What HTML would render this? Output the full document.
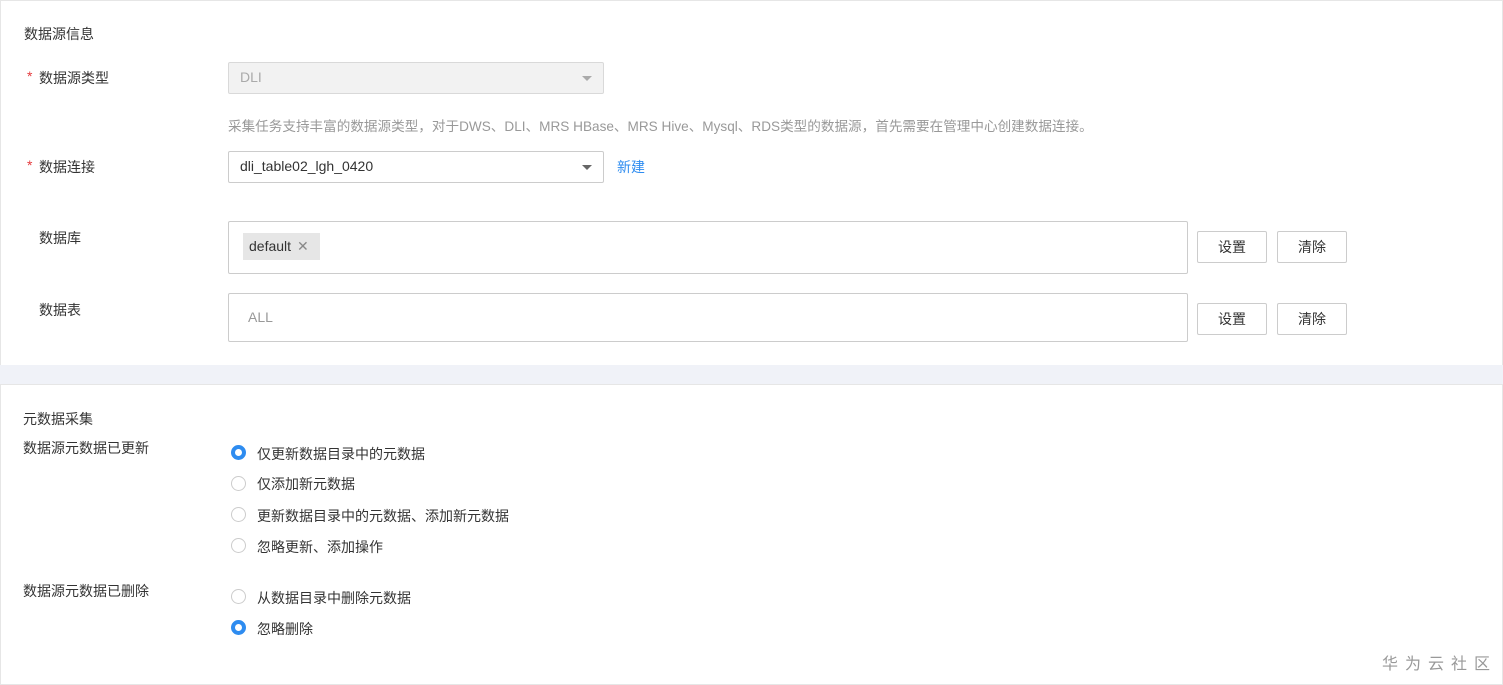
<!DOCTYPE html>
<html><head><meta charset="utf-8"><style>
*{margin:0;padding:0;box-sizing:border-box}
body{width:1503px;height:685px;background:#fff;font-family:"Liberation Sans","Noto Sans CJK SC",sans-serif;font-size:14px;color:#333;position:relative;overflow:hidden}
.a{position:absolute;white-space:nowrap}
.panel{position:absolute;left:0;width:1503px;border:1px solid #e6e6e6;background:#fff}
.req{color:#e4393c;position:absolute;left:-12px;top:0}
.box{position:absolute;border:1px solid #ccc;background:#fff;border-radius:2px}
.arrow{position:absolute;right:11px;top:13px;width:0;height:0;border-left:5px solid transparent;border-right:5px solid transparent;border-top:5px solid #666}
.btn{position:absolute;width:70px;height:32px;border:1px solid #ccc;border-radius:2px;text-align:center;line-height:30px;background:#fff;color:#333}
.r{position:absolute;left:231px;width:15px;height:15px;border-radius:50%;border:1px solid #ccc;background:#fff}
.r.on{border:4.5px solid #2e8cf0}
.rl{position:absolute;left:257px}
</style></head><body>
<div class="panel" style="top:0;height:366px"></div>
<div class="a" style="left:0;top:365px;width:1503px;height:19px;background:#f0f2f8"></div>
<div class="panel" style="top:384px;height:301px"></div>

<div class="a" style="left:24px;top:24px">数据源信息</div>
<div class="a" style="left:39px;top:68px"><span class="req">*</span>数据源类型</div>
<div class="box" style="left:228px;top:62px;width:376px;height:32px;background:#f2f2f2;border-color:#d9d9d9"><span class="a" style="left:11px;top:6px;color:#aaa">DLI</span><div class="arrow" style="border-top-color:#aaa"></div></div>
<div class="a" style="left:228px;top:115px;color:#999;font-size:13.6px">采集任务支持丰富的数据源类型，对于DWS、DLI、MRS HBase、MRS Hive、Mysql、RDS类型的数据源，首先需要在管理中心创建数据连接。</div>
<div class="a" style="left:39px;top:157px"><span class="req">*</span>数据连接</div>
<div class="box" style="left:228px;top:151px;width:376px;height:32px"><span class="a" style="left:11px;top:6px">dli_table02_lgh_0420</span><div class="arrow"></div></div>
<div class="a" style="left:617px;top:157px;color:#2e8cf0">新建</div>

<div class="a" style="left:39px;top:228px">数据库</div>
<div class="box" style="left:228px;top:221px;width:960px;height:53px"><div class="a" style="left:14px;top:11px;height:27px;width:77px;background:#e6e6e6;padding:5px 0 0 6px">default <span style="color:#888;margin-left:2px">✕</span></div></div>
<div class="btn" style="left:1197px;top:231px">设置</div>
<div class="btn" style="left:1277px;top:231px">清除</div>

<div class="a" style="left:39px;top:300px">数据表</div>
<div class="box" style="left:228px;top:293px;width:960px;height:49px"><span class="a" style="left:19px;top:15px;color:#999">ALL</span></div>
<div class="btn" style="left:1197px;top:303px">设置</div>
<div class="btn" style="left:1277px;top:303px">清除</div>

<div class="a" style="left:23px;top:409px">元数据采集</div>
<div class="a" style="left:23px;top:438px">数据源元数据已更新</div>
<div class="r on" style="top:445px"></div><div class="rl a" style="top:444px">仅更新数据目录中的元数据</div>
<div class="r" style="top:476px"></div><div class="rl a" style="top:474px">仅添加新元数据</div>
<div class="r" style="top:507px"></div><div class="rl a" style="top:506px">更新数据目录中的元数据、添加新元数据</div>
<div class="r" style="top:538px"></div><div class="rl a" style="top:537px">忽略更新、添加操作</div>
<div class="a" style="left:23px;top:581px">数据源元数据已删除</div>
<div class="r" style="top:589px"></div><div class="rl a" style="top:588px">从数据目录中删除元数据</div>
<div class="r on" style="top:620px"></div><div class="rl a" style="top:619px">忽略删除</div>

<div class="a" style="left:1382px;top:650px;color:#999;font-size:16px;letter-spacing:7px">华为云社区</div>
</body></html>
